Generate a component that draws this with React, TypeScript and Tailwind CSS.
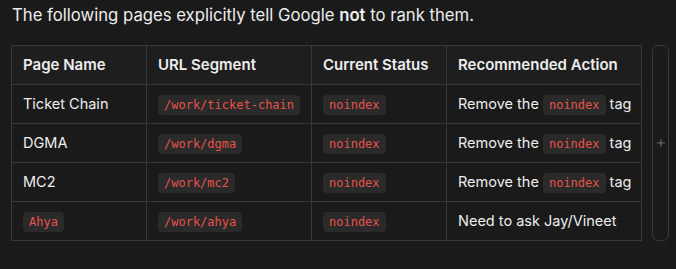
import { Plus } from 'lucide-react';

const rows = [
  { name: 'Ticket Chain', url: '/work/ticket-chain', action: 'remove' },
  { name: 'DGMA', url: '/work/dgma', action: 'remove' },
  { name: 'MC2', url: '/work/mc2', action: 'remove' },
  { name: 'Ahya', url: '/work/ahya', action: 'ask', codeName: true },
];

function Code({ children }: { children: React.ReactNode }) {
  return (
    <code className="inline-block rounded-[4px] bg-[#2a2a2a] px-[6px] py-[2px] align-middle font-['DejaVu_Sans_Mono',monospace] text-[12px] leading-[16px] text-[#e5534b]">
      {children}
    </code>
  );
}

export default function App() {
  return (
    <div className="h-[269px] w-[676px] bg-[#1a1a1a] font-['Inter',sans-serif] text-[#ededed]">
      <p className="px-3 pt-[4px] text-[16.7px] leading-[22px]">
        The following pages explicitly tell Google <strong className="font-semibold">not</strong> to rank them.
      </p>
      <div className="mt-[19px] flex items-stretch gap-[10px] pl-[11px]">
        <table className="w-[631px] table-fixed border-collapse whitespace-nowrap text-[14.5px]">
          <colgroup>
            <col className="w-[135px]" />
            <col className="w-[165px]" />
            <col className="w-[135px]" />
            <col />
          </colgroup>
          <thead>
            <tr className="bg-[#1e1e1e] text-[15px]">
              <th className="h-[39px] border border-[#383838] px-[11px] text-left font-semibold">Page Name</th>
              <th className="border border-[#383838] px-[11px] text-left font-semibold">URL Segment</th>
              <th className="border border-[#383838] px-[11px] text-left font-semibold">Current Status</th>
              <th className="border border-[#383838] px-[11px] text-left font-semibold">Recommended Action</th>
            </tr>
          </thead>
          <tbody>
            {rows.map((r) => (
              <tr key={r.name}>
                <td className="h-[39px] border border-[#383838] px-[11px]">
                  {r.codeName ? <Code>{r.name}</Code> : r.name}
                </td>
                <td className="border border-[#383838] px-[11px]">
                  <Code>{r.url}</Code>
                </td>
                <td className="border border-[#383838] px-[11px]">
                  <Code>noindex</Code>
                </td>
                <td className="border border-[#383838] px-[11px]">
                  {r.action === 'remove' ? (
                    <>
                      Remove the <Code>noindex</Code> tag
                    </>
                  ) : (
                    'Need to ask Jay/Vineet'
                  )}
                </td>
              </tr>
            ))}
          </tbody>
        </table>
        <div className="flex w-[17px] items-center justify-center rounded-[6px] border border-[#383838] text-[#8a8a8a]">
          <Plus size={12} strokeWidth={1.5} />
        </div>
      </div>
    </div>
  );
}
